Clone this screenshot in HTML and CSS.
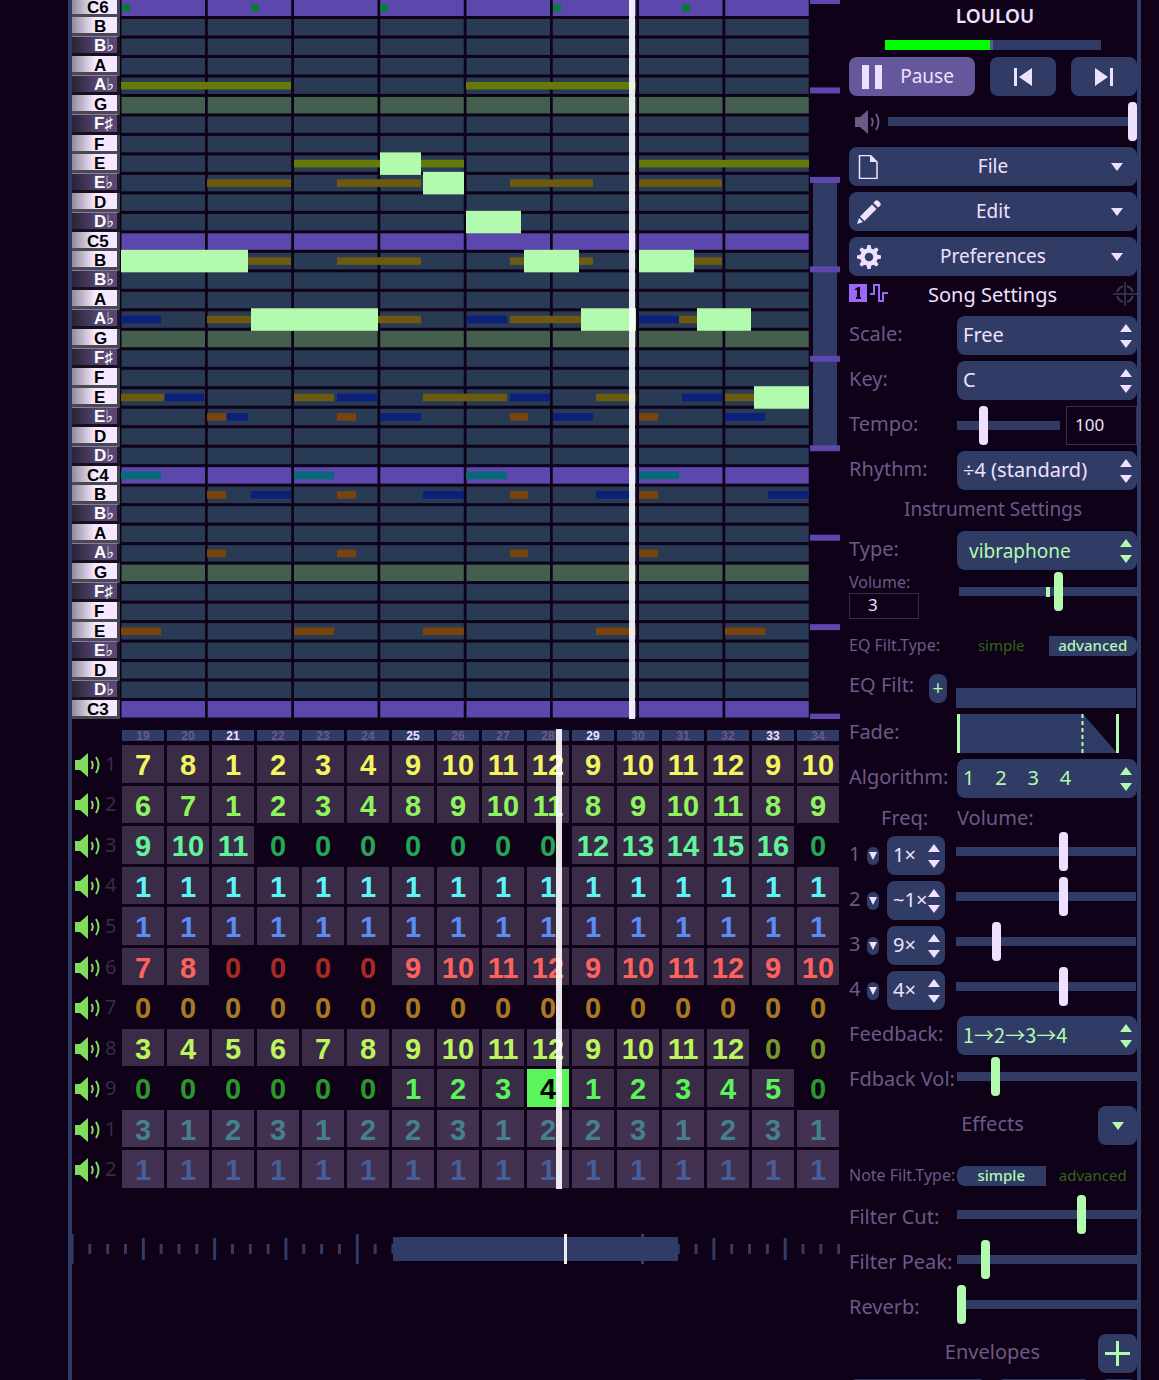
FILE: index.html
```html
<!DOCTYPE html>
<html lang="en">
<head>
    <meta charset="UTF-8">
    <title>LOULOU</title>
    <link rel="stylesheet" href="styles.css">
</head>
<body>
    <svg class="symbols" aria-hidden="true">
        <symbol id="speaker" viewBox="0 0 26 24">
            <path d="M0 7h5l8-7v24l-8-7H0z" fill="currentColor"/>
            <path d="M16.500 8q2.500 4 0 8M21 4q5 8 0 16" fill="none" stroke="currentColor" stroke-width="2"/>
        </symbol>
        <symbol id="down" viewBox="0 0 12 8">
            <path d="M0 0h12L6 8z" fill="currentColor"/>
        </symbol>
    </svg>

    <main class="frame">
        <section class="editor">
            <div class="roll">
                <div class="keys" id="keys"></div>
                <div class="notes">
                    <svg id="notes" viewBox="0 0 690 721" preserveAspectRatio="none"></svg>
                    <div class="playhead roll-playhead"></div>
                </div>
                <svg class="octaves" id="octaves" viewBox="0 0 30 719"></svg>
            </div>

            <div class="tracks">
                <div class="mutes" id="mutes"></div>
                <div class="patterns">
                    <div class="bar-numbers" id="barNumbers"></div>
                    <div class="pattern-rows" id="patternRows"></div>
                    <div class="playhead track-playhead"></div>
                </div>
            </div>

            <svg class="timeline" id="timeline" viewBox="0 0 768 30" preserveAspectRatio="none"></svg>
        </section>

        <aside class="settings">
            <h1>LOULOU</h1>
            <div class="meter"><div class="meter-level"></div></div>

            <div class="transport">
                <button class="btn pause">
                    <svg width="20" height="24" viewBox="0 0 20 24"><path d="M0 0h7v24H0zM13 0h7v24h-7z" fill="currentColor"/></svg>
                    <span>Pause</span>
                </button>
                <button class="btn skip" aria-label="Previous bar">
                    <svg width="18" height="18" viewBox="0 0 18 18"><path d="M0 0h3v18H0zM18 0v18L5 9z" fill="currentColor"/></svg>
                </button>
                <button class="btn skip" aria-label="Next bar">
                    <svg width="18" height="18" viewBox="0 0 18 18"><path d="M15 0h3v18h-3zM0 0l13 9L0 18z" fill="currentColor"/></svg>
                </button>
            </div>

            <div class="song-volume">
                <svg width="26" height="24"><use href="#speaker"/></svg>
                <input type="range" min="0" max="100" value="100" aria-label="Song volume">
            </div>

            <button class="btn menu">
                <svg width="24" height="24" viewBox="0 0 24 24"><path d="M2.500 .5h11l6.500 6.500v16.500h-17.500z" fill="none" stroke="currentColor" stroke-width="1.500"/><path d="M13 0v7h7z" fill="currentColor"/></svg>
                <span>File</span>
                <svg width="12" height="8"><use href="#down"/></svg>
            </button>
            <button class="btn menu">
                <svg width="24" height="24" viewBox="0 0 24 24"><path d="M0 24l2-6 4 4zM3 16.500L15 4.500l4.500 4.500L7.500 21zM16.500 3l1.500-2q1.500-1.500 3.500 0l1.500 1.500q1.500 2 0 3.500L21 7.500z" fill="currentColor"/></svg>
                <span>Edit</span>
                <svg width="12" height="8"><use href="#down"/></svg>
            </button>
            <button class="btn menu">
                <svg width="24" height="24" viewBox="-12 -12 24 24">
                    <circle r="6.500" fill="none" stroke="currentColor" stroke-width="4.500"/>
                    <g id="tooth" fill="currentColor"><path d="M-2.500-8l1-4h3l1 4zM-2.500 8l1 4h3l1-4zM-8-2.500l-4 1v3l4 1zM8-2.500l4 1v3l-4 1z"/></g>
                    <use href="#tooth" transform="rotate(45)"/>
                </svg>
                <span>Preferences</span>
                <svg width="12" height="8"><use href="#down"/></svg>
            </button>

            <div class="tab-row">
                <svg width="39" height="18" viewBox="0 0 39 18">
                    <path d="M0 0h18v18H0z" fill="#9b68fa"/>
                    <path d="M6 5l3-2h2v10h1v2H7v-2h1V6H6z" fill="#0e0118"/>
                    <path d="M21 10h4V1h5v16h4V9h5" fill="none" stroke="#9b68fa" stroke-width="2"/>
                </svg>
                <h2>Song Settings</h2>
                <svg width="24" height="24" viewBox="0 0 24 24">
                    <path d="M12 0v24M0 12h24" stroke="#3e3b50" stroke-width="1.500"/>
                    <circle cx="12" cy="12" r="8" fill="none" stroke="#3e3b50" stroke-width="2" stroke-dasharray="8.500 4" stroke-dashoffset="-2"/>
                </svg>
            </div>

            <div class="row">
                <label for="scale">Scale:</label>
                <select id="scale"><option>Free</option></select>
            </div>
            <div class="row">
                <label for="key">Key:</label>
                <select id="key"><option>C</option></select>
            </div>
            <div class="row tempo">
                <label for="tempo">Tempo:</label>
                <input type="range" id="tempo" min="0" max="100" value="23">
                <input type="text" value="100" aria-label="Tempo value">
            </div>
            <div class="row">
                <label for="rhythm">Rhythm:</label>
                <select id="rhythm"><option>÷4 (standard)</option></select>
            </div>

            <h2 class="instrument-title">Instrument Settings</h2>

            <div class="row green">
                <label for="type">Type:</label>
                <select id="type" class="type"><option>vibraphone</option></select>
            </div>
            <div class="volume-row green">
                <div class="volume-box">
                    <label for="volumeValue">Volume:</label>
                    <input type="text" id="volumeValue" value="3">
                </div>
                <div class="volume-slider">
                    <input type="range" min="0" max="100" value="56" aria-label="Instrument volume">
                    <div class="volume-mark"></div>
                </div>
            </div>
            <div class="switch-row">
                <span>EQ Filt.Type:</span>
                <button>simple</button>
                <button class="on">advanced</button>
            </div>
            <div class="row eq green">
                <span class="label">EQ Filt:</span>
                <button class="add-filter" aria-label="Edit EQ filter">+</button>
                <div class="eq-box"></div>
            </div>
            <div class="row">
                <span class="label">Fade:</span>
                <svg width="180" height="39" viewBox="0 0 180 39">
                    <path d="M0 0h126l34 39H0z" fill="#303c66"/>
                    <path d="M0 0h3v39H0zM159 0h3v39h-3z" fill="#b1faae"/>
                    <path d="M125.500 0v39" stroke="#b1faae" stroke-width="2" stroke-dasharray="4 3"/>
                </svg>
            </div>
            <div class="row green">
                <label for="algorithm">Algorithm:</label>
                <select id="algorithm"><option>1&nbsp;&nbsp;&nbsp; 2&nbsp;&nbsp;&nbsp; 3&nbsp;&nbsp;&nbsp; 4</option></select>
            </div>
            <div class="op-titles"><span>Freq:</span><span>Volume:</span></div>
            <div class="operators" id="operators"></div>
            <div class="row green">
                <label for="feedback">Feedback:</label>
                <select id="feedback" class="feedback"><option>1→2→3→4</option></select>
            </div>
            <div class="row slider green">
                <label for="feedbackVolume">Fdback Vol:</label>
                <input type="range" id="feedbackVolume" min="0" max="100" value="20">
            </div>
            <div class="title-row">
                <h2>Effects</h2>
                <button class="btn square" aria-label="Effects menu"><svg width="12" height="8"><use href="#down"/></svg></button>
            </div>
            <div class="switch-row note-filter">
                <span>Note Filt.Type:</span>
                <button class="on">simple</button>
                <button>advanced</button>
            </div>
            <div class="row slider green">
                <label for="cut">Filter Cut:</label>
                <input type="range" id="cut" min="0" max="100" value="70">
            </div>
            <div class="row slider green">
                <label for="peak">Filter Peak:</label>
                <input type="range" id="peak" min="0" max="100" value="14">
            </div>
            <div class="row slider green">
                <label for="reverb">Reverb:</label>
                <input type="range" id="reverb" min="0" max="100" value="0">
            </div>
            <div class="title-row">
                <h2>Envelopes</h2>
                <button class="btn square" aria-label="Add envelope"><svg width="25" height="25" viewBox="0 0 25 25"><path d="M0 12.500h25M12.500 0v25" stroke="currentColor" stroke-width="3"/></svg></button>
            </div>
            <div class="envelope"><div></div><div></div><div></div></div>
        </aside>
    </main>
    <script src="editor.js"></script>
</body>
</html>
```
FILE: styles.css
```css
* {
    box-sizing: border-box;
}

body {
    margin: 0;
    height: 100vh;
    overflow: hidden;
    background-color: #0e0118;
    color: #f0e0ff;
    font-family: "Noto Sans", sans-serif;
    font-size: 19px;
    line-height: 26px;
}

h1, h2 {
    margin: 0;
    font-size: 20px;
    font-weight: normal;
    text-align: center;
}

button, input, select {
    margin: 0;
    font: inherit;
    color: inherit;
}

svg {
    display: block;
    flex: none;
}

.symbols {
    position: absolute;
    width: 0;
    height: 0;
}

.frame {
    display: flex;
    gap: 9px;
    min-height: 100vh;
    margin: 0 18px 0 68px;
    border: solid #303c66;
    border-width: 0 4px;
}

.editor {
    flex: 1;
    min-width: 0;
}

/* piano roll */
.roll {
    display: flex;
    align-items: flex-end;
    height: 719px;
    overflow: hidden;
}

.keys {
    display: flex;
    flex-direction: column;
    width: 48px;
    height: 721px;
    font: bold 17px/19px "Liberation Sans", "DejaVu Sans", sans-serif;
}

.key {
    flex: 1;
    min-height: 0;
    padding-left: 22px;
    white-space: nowrap;
    color: #000;
    background: linear-gradient(90deg, #938b9b, #f5e8ff 50%);
    border-right: 3px solid #45434b;
    border-bottom: 3px solid #4a4850;
}

.key.octave {
    padding-left: 15px;
}

.key.black {
    color: #fff;
    background: linear-gradient(90deg, #2b2238, #574772 60%);
    border-top: 1px solid #8b78a5;
    border-right-color: #1d1627;
    border-bottom-color: #18101f;
    line-height: 17px;
}

.notes {
    position: relative;
    flex: 1;
    height: 721px;
}

.notes svg {
    width: 100%;
    height: 721px;
}

.octaves {
    width: 30px;
    height: 719px;
}

.playhead {
    position: absolute;
    top: 0;
    bottom: 0;
    width: 6px;
    background-color: rgba(255, 255, 255, 0.9);
}

.roll-playhead {
    left: 73.8%;
}

.track-playhead {
    left: 60.6%;
}

/* pattern grid */
.tracks {
    display: flex;
    margin-top: 10px;
}

.mutes {
    display: flex;
    flex-direction: column;
    gap: 3px;
    width: 48px;
    height: 460px;
    padding: 16px 0 1px;
}

.mute {
    display: flex;
    align-items: center;
    gap: 4px;
    flex: 1;
    min-height: 0;
    padding: 2px 0 0 3px;
    border: 0;
    background: none;
    color: #82dc5c;
}

.mute span {
    padding-bottom: 2px;
    color: #3a2b46;
    font-size: 20px;
}

.patterns {
    position: relative;
    flex: 1;
    height: 460px;
    padding: 1px 1px 1px 2px;
    font-family: "Liberation Sans", sans-serif;
    font-weight: bold;
    text-align: center;
}

.bar-numbers, .pattern-row {
    display: grid;
    grid-template-columns: repeat(16, minmax(0, 1fr));
    gap: 3px;
}

.bar-numbers {
    height: 15px;
    font-size: 12px;
    line-height: 12px;
    color: #6b5a86;
}

.bar-numbers div {
    height: 11px;
    background-color: #303c66;
}

.bar-numbers .strong {
    color: #f0e0ff;
}

.pattern-rows {
    display: flex;
    flex-direction: column;
    gap: 3px;
    height: 443px;
}

.pattern-row {
    flex: 1;
    min-height: 0;
    font-size: 29px;
    line-height: 40px;
    color: var(--bright);
}

.cell {
    min-height: 0;
    background-color: #3a2b46;
}

.mod .cell {
    background-color: #423150;
}

.cell.empty {
    background: none;
    color: var(--dim);
}

.cell.selected {
    background-color: #5af55a;
    color: #000;
}

.timeline {
    width: 100%;
    height: 30px;
    margin-top: 45px;
}

/* settings column */
.settings {
    display: flex;
    flex-direction: column;
    gap: 6px;
    width: 288px;
    flex: none;
}

h1 {
    height: 34px;
    padding-left: 4px;
    font-size: 19px;
    line-height: 32px;
    font-weight: 600;
}

.meter {
    width: 75%;
    height: 10px;
    margin: 0 auto 1px;
    background-color: #303c66;
}

.meter-level {
    width: 50%;
    height: 10px;
    background-color: #00ff00;
    border-right: 3px solid #64579c;
}

.btn {
    display: flex;
    align-items: center;
    justify-content: center;
    height: 39px;
    padding: 0;
    border: 0;
    border-radius: 8px;
    background-color: #303c66;
}

.btn span {
    padding-bottom: 2px;
}

.transport {
    display: flex;
    gap: 15px;
}

.pause {
    flex: 1;
    gap: 18px;
    padding-right: 8px;
    background-color: #64579c;
}

.skip {
    width: 66px;
}

.song-volume {
    display: flex;
    align-items: center;
    gap: 7px;
    padding-left: 6px;
    color: #6b5a86;
}

.song-volume input {
    flex: 1;
    min-width: 0;
}

.menu {
    padding: 0 14px 0 8px;
}

.menu span {
    flex: 1;
    padding-right: 6px;
}

.tab-row {
    display: flex;
    height: 28px;
}

.tab-row svg {
    margin-top: 2px;
}

.tab-row h2 {
    flex: 1;
    padding-right: 16px;
}

.tab-row svg:last-child {
    margin-top: 0;
}

.instrument-title, .title-row h2 {
    color: #6b5a86;
}

.instrument-title {
    height: 29px;
    font-size: 19px;
}

.row {
    display: grid;
    grid-template-columns: 108px minmax(0, 1fr);
    align-items: center;
    height: 39px;
}

.row label, .label {
    padding-bottom: 3px;
    color: #6b5a86;
    font-size: 20px;
    white-space: nowrap;
}

select {
    appearance: none;
    width: 100%;
    height: 39px;
    padding: 0 6px 2px;
    border: 0;
    border-radius: 8px;
    background: #303c66 url("data:image/svg+xml,%3Csvg xmlns='http://www.w3.org/2000/svg' width='12' height='24'%3E%3Cpath d='M0 8h12L6 0zM0 16h12l-6 8z' fill='%23f0e0ff'/%3E%3C/svg%3E") no-repeat right 5px center;
    font-size: 20px;
}

.green {
    color: #b1faae;
}

.green select {
    background-image: url("data:image/svg+xml,%3Csvg xmlns='http://www.w3.org/2000/svg' width='12' height='24'%3E%3Cpath d='M0 8h12L6 0zM0 16h12l-6 8z' fill='%23b1faae'/%3E%3C/svg%3E");
}

select.type {
    padding: 0 12px;
    font-size: 19px;
}

select.feedback {
    font-family: "Noto Sans CJK JP", sans-serif;
}

input[type="range"] {
    appearance: none;
    width: 100%;
    height: 39px;
    background: none;
    color: #f0e0ff;
}

.green input[type="range"] {
    color: #b1faae;
}

input[type="range"]::-webkit-slider-runnable-track {
    height: 9px;
    background-color: #303c66;
}

input[type="range"]::-webkit-slider-thumb {
    appearance: none;
    width: 9px;
    height: 39px;
    margin-top: -15px;
    border-radius: 4px;
    background-color: currentColor;
}

input[type="text"] {
    min-width: 0;
    border: 1px solid #3a2b46;
    background: none;
    color: #f0e0ff;
    font-size: 17px;
}

.row.tempo {
    grid-template-columns: 108px minmax(0, 1fr) 71px;
}

.tempo input[type="range"] {
    width: calc(100% - 6px);
}

.tempo input[type="text"] {
    height: 39px;
    padding: 0 8px 3px;
}

.slider input, .operator input {
    margin-top: -8px;
}

.volume-row {
    display: flex;
    gap: 40px;
    height: 58px;
    margin-top: -4px;
}

.volume-box {
    display: flex;
    flex-direction: column;
    width: 70px;
    font-size: 16px;
    line-height: 21px;
    color: #6b5a86;
}

.volume-box input {
    height: 26px;
    padding: 0 18px 3px;
}

.volume-slider {
    position: relative;
    flex: 1;
}

.volume-slider input {
    display: block;
}

.volume-mark {
    position: absolute;
    top: 15px;
    left: 49%;
    width: 4px;
    height: 10px;
    background-color: #b1faae;
}

.switch-row {
    display: grid;
    grid-template-columns: 105px 1fr 1fr;
    gap: 3px;
    height: 20px;
    font-size: 15px;
    line-height: 18px;
    color: #6b5a86;
    white-space: nowrap;
}

.switch-row span {
    font-size: 16px;
}

.switch-row button {
    height: 20px;
    padding: 0 0 2px;
    border: 0;
    background: none;
    color: #356318;
}

.switch-row .on {
    background-color: #303c66;
    color: #b1faae;
    font-weight: 500;
}

.switch-row button:nth-child(2) {
    border-radius: 8px 0 0 8px;
}

.switch-row button:nth-child(3) {
    border-radius: 0 8px 8px 0;
}

.row.eq {
    grid-template-columns: 80px 27px minmax(0, 1fr);
    height: 46px;
}

.eq .label {
    padding: 0;
}

.add-filter {
    width: 18px;
    height: 29px;
    margin-top: 7px;
    padding: 0 0 2px;
    border: 0;
    border-radius: 8px;
    background-color: #303c66;
}

.eq-box {
    align-self: end;
    height: 20px;
    margin-right: 1px;
    background-color: #303c66;
}

.op-titles {
    display: grid;
    grid-template-columns: 76px 1fr;
    height: 26px;
    padding-left: 32px;
    color: #6b5a86;
    line-height: 28px;
    font-size: 20px;
}

.operators {
    display: flex;
    flex-direction: column;
    gap: 6px;
}

.operator {
    display: grid;
    grid-template-columns: 18px 20px 58px minmax(0, 1fr);
    align-items: center;
    height: 39px;
}

.operator label {
    padding-bottom: 3px;
    color: #6b5a86;
    font-size: 20px;
}

.operator button {
    display: flex;
    align-items: center;
    justify-content: center;
    width: 12px;
    height: 18px;
    padding: 0;
    border: 0;
    border-radius: 6px;
    background-color: #303c66;
}

.operator input {
    width: calc(100% - 12px);
    margin-left: 11px;
}

.title-row {
    display: grid;
    grid-template-columns: 249px 39px;
    align-items: center;
}

.title-row h2 {
    padding: 0 0 3px 38px;
}

.square {
    color: #b1faae;
}

.note-filter {
    margin: 15px 0 7px;
}

.envelope {
    display: grid;
    grid-template-columns: 138px 95px 1fr;
    gap: 9px;
}

.envelope div {
    height: 39px;
    border-radius: 8px;
    background-color: #303c66;
}
```
FILE: editor.js
```javascript
const rowHeight = 721 / 37;
const names = ['C', 'B', 'B♭', 'A', 'A♭', 'G', 'F♯', 'F', 'E', 'E♭', 'D', 'D♭'];

// piano keys, from C6 down to C3
let keys = '';
for (let i = 0; i < 37; i++) {
    const name = names[i % 12];
    if (name === 'C') {
        keys += `<div class="key octave">C${6 - i / 12}</div>`;
    } else {
        keys += `<div class="key ${name.length > 1 ? 'black' : ''}">${name}</div>`;
    }
}
document.getElementById('keys').innerHTML = keys;

const colors = {
    main: '#b1faae',
    olive: '#667a0a',
    brown: '#6b5a10',
    blue: '#0a207a',
    orange: '#7a430c',
    teal: '#066b78',
    green: '#0b7840'
};

// [row, color, start, end, start, end, ...]
const notes = [
    [0, 'green', 2, 10, 131, 139, 260, 268, 433, 441, 562, 570],
    [4, 'olive', 1, 171, 346, 516],
    [8, 'olive', 174, 344, 519, 689],
    [9, 'brown', 87, 171, 217, 301, 390, 473, 519, 602],
    [13, 'brown', 87, 171, 217, 301, 390, 473, 519, 602],
    [16, 'blue', 1, 41, 346, 387, 519, 559],
    [16, 'brown', 87, 171, 217, 301, 390, 473, 559, 602],
    [20, 'brown', 1, 44, 174, 214, 303, 387, 476, 516, 605, 636],
    [20, 'blue', 45, 84, 217, 257, 390, 430, 562, 602],
    [21, 'orange', 87, 106, 217, 236, 390, 408, 519, 538],
    [21, 'blue', 107, 128, 260, 301, 433, 473, 605, 645],
    [24, 'teal', 1, 41, 174, 214, 346, 387, 519, 559],
    [25, 'orange', 87, 106, 217, 236, 390, 408, 519, 538],
    [25, 'blue', 131, 171, 303, 344, 476, 516, 648, 689],
    [28, 'orange', 87, 106, 217, 236, 390, 408, 519, 538],
    [32, 'orange', 1, 41, 174, 214, 303, 344, 476, 516, 605, 645],
    [8, 'main', 260, 301],
    [9, 'main', 303, 344],
    [11, 'main', 346, 401],
    [13, 'main', 1, 128, 404, 459, 519, 574],
    [16, 'main', 131, 258, 461, 516, 577, 631],
    [20, 'main', 634, 689]
];

let roll = '';
for (let row = 0; row < 37; row++) {
    const color = row % 12 === 0 ? '#5c47ad' : row % 12 === 5 ? '#455f4e' : '#293a54';
    for (let beat = 0; beat < 8; beat++) {
        roll += `<rect x="${beat * 86.25 + 1.5}" y="${row * rowHeight + 1.5}" width="83.5" height="16.5" fill="${color}"/>`;
    }
}
for (const [row, color, ...spans] of notes) {
    const height = color === 'main' ? 22.6 : 7.6;
    const y = (row + 0.5) * rowHeight - height / 2;
    for (let i = 0; i < spans.length; i += 2) {
        roll += `<rect x="${spans[i]}" y="${y}" width="${spans[i + 1] - spans[i]}" height="${height}" fill="${colors[color]}"/>`;
    }
}
document.getElementById('notes').innerHTML = roll;

// octave scroll bar
let octaves = '<rect x="3" y="180" width="24" height="268" fill="#303c66"/>';
for (let i = 0; i < 9; i++) {
    octaves += `<rect x="0" y="${i * 89.45 - 2}" width="30" height="6" fill="#5c47ad"/>`;
}
document.getElementById('octaves').innerHTML = octaves;

// bar numbers and patterns
let bars = '';
for (let bar = 19; bar <= 34; bar++) {
    bars += `<div class="${bar % 4 === 1 ? 'strong' : ''}">${bar}</div>`;
}
document.getElementById('barNumbers').innerHTML = bars;

const tracks = [
    { name: 1, bright: '#f2f55c', cells: '7 8 1 2 3 4 9 10 11 12 9 10 11 12 9 10' },
    { name: 2, bright: '#8ef55c', cells: '6 7 1 2 3 4 8 9 10 11 8 9 10 11 8 9' },
    { name: 3, bright: '#60f59a', dim: '#25a555', cells: '9 10 11 0 0 0 0 0 0 0 12 13 14 15 16 0' },
    { name: 4, bright: '#5df5f8', cells: '1 1 1 1 1 1 1 1 1 1 1 1 1 1 1 1' },
    { name: 5, bright: '#5a8cf5', cells: '1 1 1 1 1 1 1 1 1 1 1 1 1 1 1 1' },
    { name: 6, bright: '#ff625c', dim: '#a82a25', cells: '7 8 0 0 0 0 9 10 11 12 9 10 11 12 9 10' },
    { name: 7, dim: '#a87a24', cells: '0 0 0 0 0 0 0 0 0 0 0 0 0 0 0 0' },
    { name: 8, bright: '#bcf55a', dim: '#74962a', cells: '3 4 5 6 7 8 9 10 11 12 9 10 11 12 0 0' },
    { name: 9, bright: '#5af55a', dim: '#2a982a', selected: 9, cells: '0 0 0 0 0 0 1 2 3 4 1 2 3 4 5 0' },
    { name: 1, bright: '#45808e', mod: true, cells: '3 1 2 3 1 2 2 3 1 2 2 3 1 2 3 1' },
    { name: 2, bright: '#455f9c', mod: true, cells: '1 1 1 1 1 1 1 1 1 1 1 1 1 1 1 1' }
];

let mutes = '';
let rows = '';
for (const track of tracks) {
    mutes += `<button class="mute" aria-label="Mute"><svg width="26" height="24"><use href="#speaker"/></svg><span>${track.name}</span></button>`;
    rows += `<div class="pattern-row ${track.mod ? 'mod' : ''}" style="--bright: ${track.bright}; --dim: ${track.dim}">`;
    track.cells.split(' ').forEach((value, i) => {
        const state = value === '0' ? 'empty' : i === track.selected ? 'selected' : '';
        rows += `<div class="cell ${state}">${value}</div>`;
    });
    rows += '</div>';
}
document.getElementById('mutes').innerHTML = mutes;
document.getElementById('patternRows').innerHTML = rows;

// song overview
let timeline = '';
for (let i = 0; i <= 43; i++) {
    const height = i % 16 === 0 ? 30 : i % 4 === 0 ? 22 : 10;
    timeline += `<rect x="${i * 17.83 - 1.5}" y="${15 - height / 2}" width="3" height="${height}" fill="#303c66"/>`;
}
timeline += '<rect x="321" y="3" width="285" height="24" fill="#303c66"/>';
timeline += '<rect x="492" y="0" width="3" height="30" fill="#f0e8f5"/>';
document.getElementById('timeline').innerHTML = timeline;

// operators
const operators = [['1×', 60], ['~1×', 60], ['9×', 21], ['4×', 60]];
let ops = '';
operators.forEach(([freq, volume], i) => {
    ops += `<div class="operator">
        <label for="op${i}">${i + 1}</label>
        <button aria-label="Operator options"><svg width="8" height="8" viewBox="0 0 12 8" preserveAspectRatio="none"><path d="M0 0h12L6 8z" fill="currentColor"/></svg></button>
        <select id="op${i}"><option>${freq}</option></select>
        <input type="range" min="0" max="100" value="${volume}" aria-label="Operator volume">
    </div>`;
});
document.getElementById('operators').innerHTML = ops;
```
